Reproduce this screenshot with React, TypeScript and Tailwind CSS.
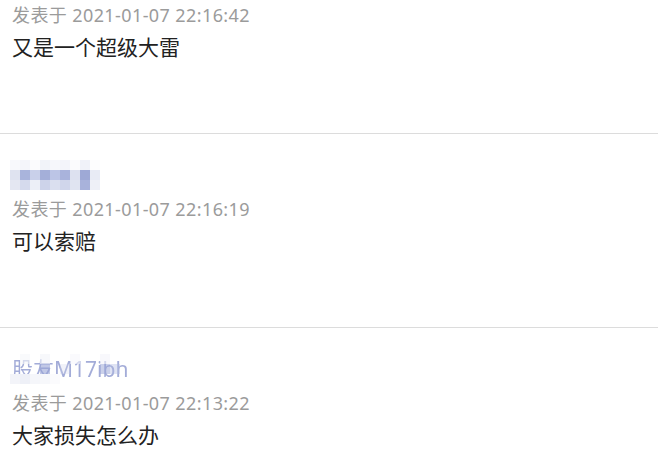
const rows2 = [
  ["bg-[#f8f9fc]", "bg-[#f4f5fa]", "bg-[#fbfbfd]", "bg-[#f1f3f9]", "bg-[#f6f7fb]", "bg-[#f3f4fa]", "bg-[#fbfbfd]", "bg-[#f0f2f9]", "bg-[#fdfdfe]"],
  ["bg-[#dfe3f0]", "bg-[#a9b4dc]", "bg-[#c9d0ea]", "bg-[#a4afd9]", "bg-[#bcc5e6]", "bg-[#a9b3dc]", "bg-[#dde1f0]", "bg-[#9ea9d6]", "bg-[#e8ebf5]"],
  ["bg-[#e4e7f2]", "bg-[#d5daed]", "bg-[#eceff7]", "bg-[#cdd3ea]", "bg-[#dadfef]", "bg-[#d0d6eb]", "bg-[#e0e4f1]", "bg-[#a8b2db]", "bg-[#eef0f7]"],
];

const rows3 = [
  ["bg-white/0", "bg-[#f5f6fa]/60", "bg-white/0", "bg-[#f2f3f9]/60", "bg-white/0", "bg-white/0", "bg-[#f6f7fb]/60", "bg-white/0", "bg-white/0", "bg-[#f3f4fa]/60", "bg-white/0", "bg-white/0", "bg-white/0"],
  ["bg-white/0", "bg-white/0", "bg-white/0", "bg-[#98a4d6]/60", "bg-white/0", "bg-[#cfd5ec]/30", "bg-white/0", "bg-white/0", "bg-white/0", "bg-[#98a4d6]/50", "bg-[#aeb8e0]/40", "bg-white/0", "bg-white/0"],
  ["bg-[#f3f4f9]", "bg-[#eef0f7]", "bg-[#f5f6fa]", "bg-[#f7f8fb]", "bg-[#fbfbfd]", "bg-white/0", "bg-white/0", "bg-white/0", "bg-white/0", "bg-white/0", "bg-white/0", "bg-white/0", "bg-white/0"],
];

function Mosaic({ rows }: { rows: string[][] }) {
  return (
    <div className="flex flex-col">
      {rows.map((row, i) => (
        <div key={i} className="flex">
          {row.map((c, j) => (
            <div key={j} className={`w-[10px] h-[10px] ${c}`} />
          ))}
        </div>
      ))}
    </div>
  );
}

function BlurName() {
  return (
    <div className="relative h-[30px] w-[130px] flex items-center">
      <span className="text-[21px] leading-[22px] text-[#a3acd8] blur-[0.6px] pl-[2px]">股友M17ibh</span>
      <div className="absolute inset-0">
        <Mosaic rows={rows3} />
      </div>
    </div>
  );
}

const comments = [
  { name: null, time: "2021-01-07 22:16:42", text: "又是一个超级大雷" },
  { name: "mosaic", time: "2021-01-07 22:16:19", text: "可以索赔" },
  { name: "blur", time: "2021-01-07 22:13:22", text: "大家损失怎么办" },
];

export default function App() {
  return (
    <div
      className="w-[658px] h-[462px] overflow-hidden bg-white"
      style={{ fontFamily: '"Noto Sans", "Noto Sans CJK SC", sans-serif' }}
    >
      <div className="-mt-[60px]">
        {comments.map((c, i) => (
          <div key={i} className={`pl-[12px] pt-[26px] pb-[71px] ${i > 0 ? "border-t border-[#dcdcdc]" : ""}`}>
            <div className="h-[30px] -ml-[2px]">
              {c.name === "mosaic" && <Mosaic rows={rows2} />}
              {c.name === "blur" && <BlurName />}
            </div>
            <div className="mt-[7px] text-[18px] leading-[24px] tracking-[0.4px] text-[#9b9b9b]">
              发表于 {c.time}
            </div>
            <div className="mt-[5px] text-[21px] leading-[30px] text-[#222]">{c.text}</div>
          </div>
        ))}
      </div>
    </div>
  );
}
